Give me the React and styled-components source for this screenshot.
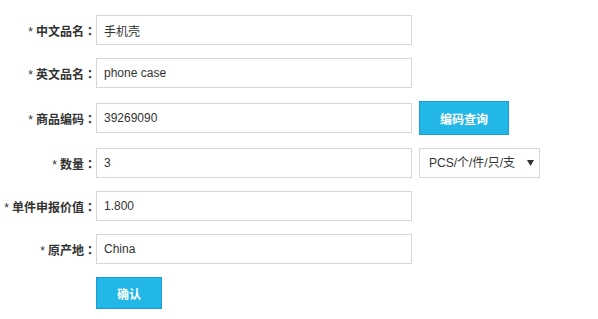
import React from "react";
import styled, { createGlobalStyle } from "styled-components";

const Global = createGlobalStyle`
  html, body { margin: 0; padding: 0; background: #fff; }
  body { font-family: "Liberation Sans", Arial, "Noto Sans CJK SC", sans-serif; color: #333; }
  * { box-sizing: border-box; }
`;

const Form = styled.form`
  display: flex;
  flex-direction: column;
  padding-top: 15px;
  width: 598px;
`;

const Row = styled.div`
  display: flex;
  align-items: center;
  margin-bottom: 13px;
`;

const Label = styled.label`
  width: 96px;
  flex: none;
  text-align: right;
  font-size: 12px;
  font-weight: bold;
  color: #333;
  white-space: nowrap;
  font-family: "Liberation Sans", Arial, "Noto Sans CJK SC", sans-serif;
`;

const Star = styled.span`
  font-weight: normal;
  margin-right: 3px;
`;

const Colon = styled.span`
  font-family: "Noto Sans CJK TC", sans-serif;
`;

const Input = styled.input`
  width: 316px;
  height: 30px;
  border: 1px solid #d6d6d6;
  padding: 0 7px;
  font-size: 12px;
  color: #333;
  font-family: "Liberation Sans", Arial, "Noto Sans CJK SC", sans-serif;
  outline: none;
  background: #fff;
`;

const Button = styled.button`
  margin-left: ${(p) => p.$offset || 0}px;
  width: ${(p) => p.$w}px;
  height: ${(p) => p.$h}px;
  background: #23b7e8;
  border: 1px solid #1b9cd9;
  color: #fff;
  font-size: 12px;
  font-weight: bold;
  font-family: "Liberation Sans", Arial, "Noto Sans CJK SC", sans-serif;
  padding: 0;
  cursor: pointer;
`;

const SelectWrap = styled.div`
  position: relative;
  margin-left: 7px;
  width: 121px;
  height: 30px;
`;

const Select = styled.select`
  appearance: none;
  -webkit-appearance: none;
  width: 100%;
  height: 100%;
  border: 1px solid #d6d6d6;
  background: #fff;
  padding: 0 0 0 9px;
  font-size: 12px;
  color: #333;
  font-family: "Liberation Sans", Arial, "Noto Sans CJK SC", sans-serif;
  border-radius: 0;
  outline: none;
`;

const Caret = styled.svg`
  position: absolute;
  right: 6px;
  top: 12px;
  pointer-events: none;
`;

const Field = ({ label, value }) => (
  <>
    <Label><Star>*</Star>{label}<Colon>：</Colon></Label>
    <Input defaultValue={value} />
  </>
);

export default function App() {
  return (
    <>
      <Global />
      <Form onSubmit={(e) => e.preventDefault()}>
        <Row>
          <Field label="中文品名" value="手机壳" />
        </Row>
        <Row>
          <Field label="英文品名" value="phone case" />
        </Row>
        <Row>
          <Field label="商品编码" value="39269090" />
          <Button type="button" $offset={7} $w={90} $h={34}>编码查询</Button>
        </Row>
        <Row>
          <Field label="数量" value="3" />
          <SelectWrap>
            <Select defaultValue="pcs">
              <option value="pcs">PCS/个/件/只/支</option>
            </Select>
            <Caret width="7" height="6" viewBox="0 0 7 6">
              <path d="M0 0 H7 L3.5 6 Z" fill="#333" />
            </Caret>
          </SelectWrap>
        </Row>
        <Row>
          <Field label="单件申报价值" value="1.800" />
        </Row>
        <Row>
          <Field label="原产地" value="China" />
        </Row>
        <Row>
          <Button type="submit" $offset={96} $w={66} $h={32}>确认</Button>
        </Row>
      </Form>
    </>
  );
}
